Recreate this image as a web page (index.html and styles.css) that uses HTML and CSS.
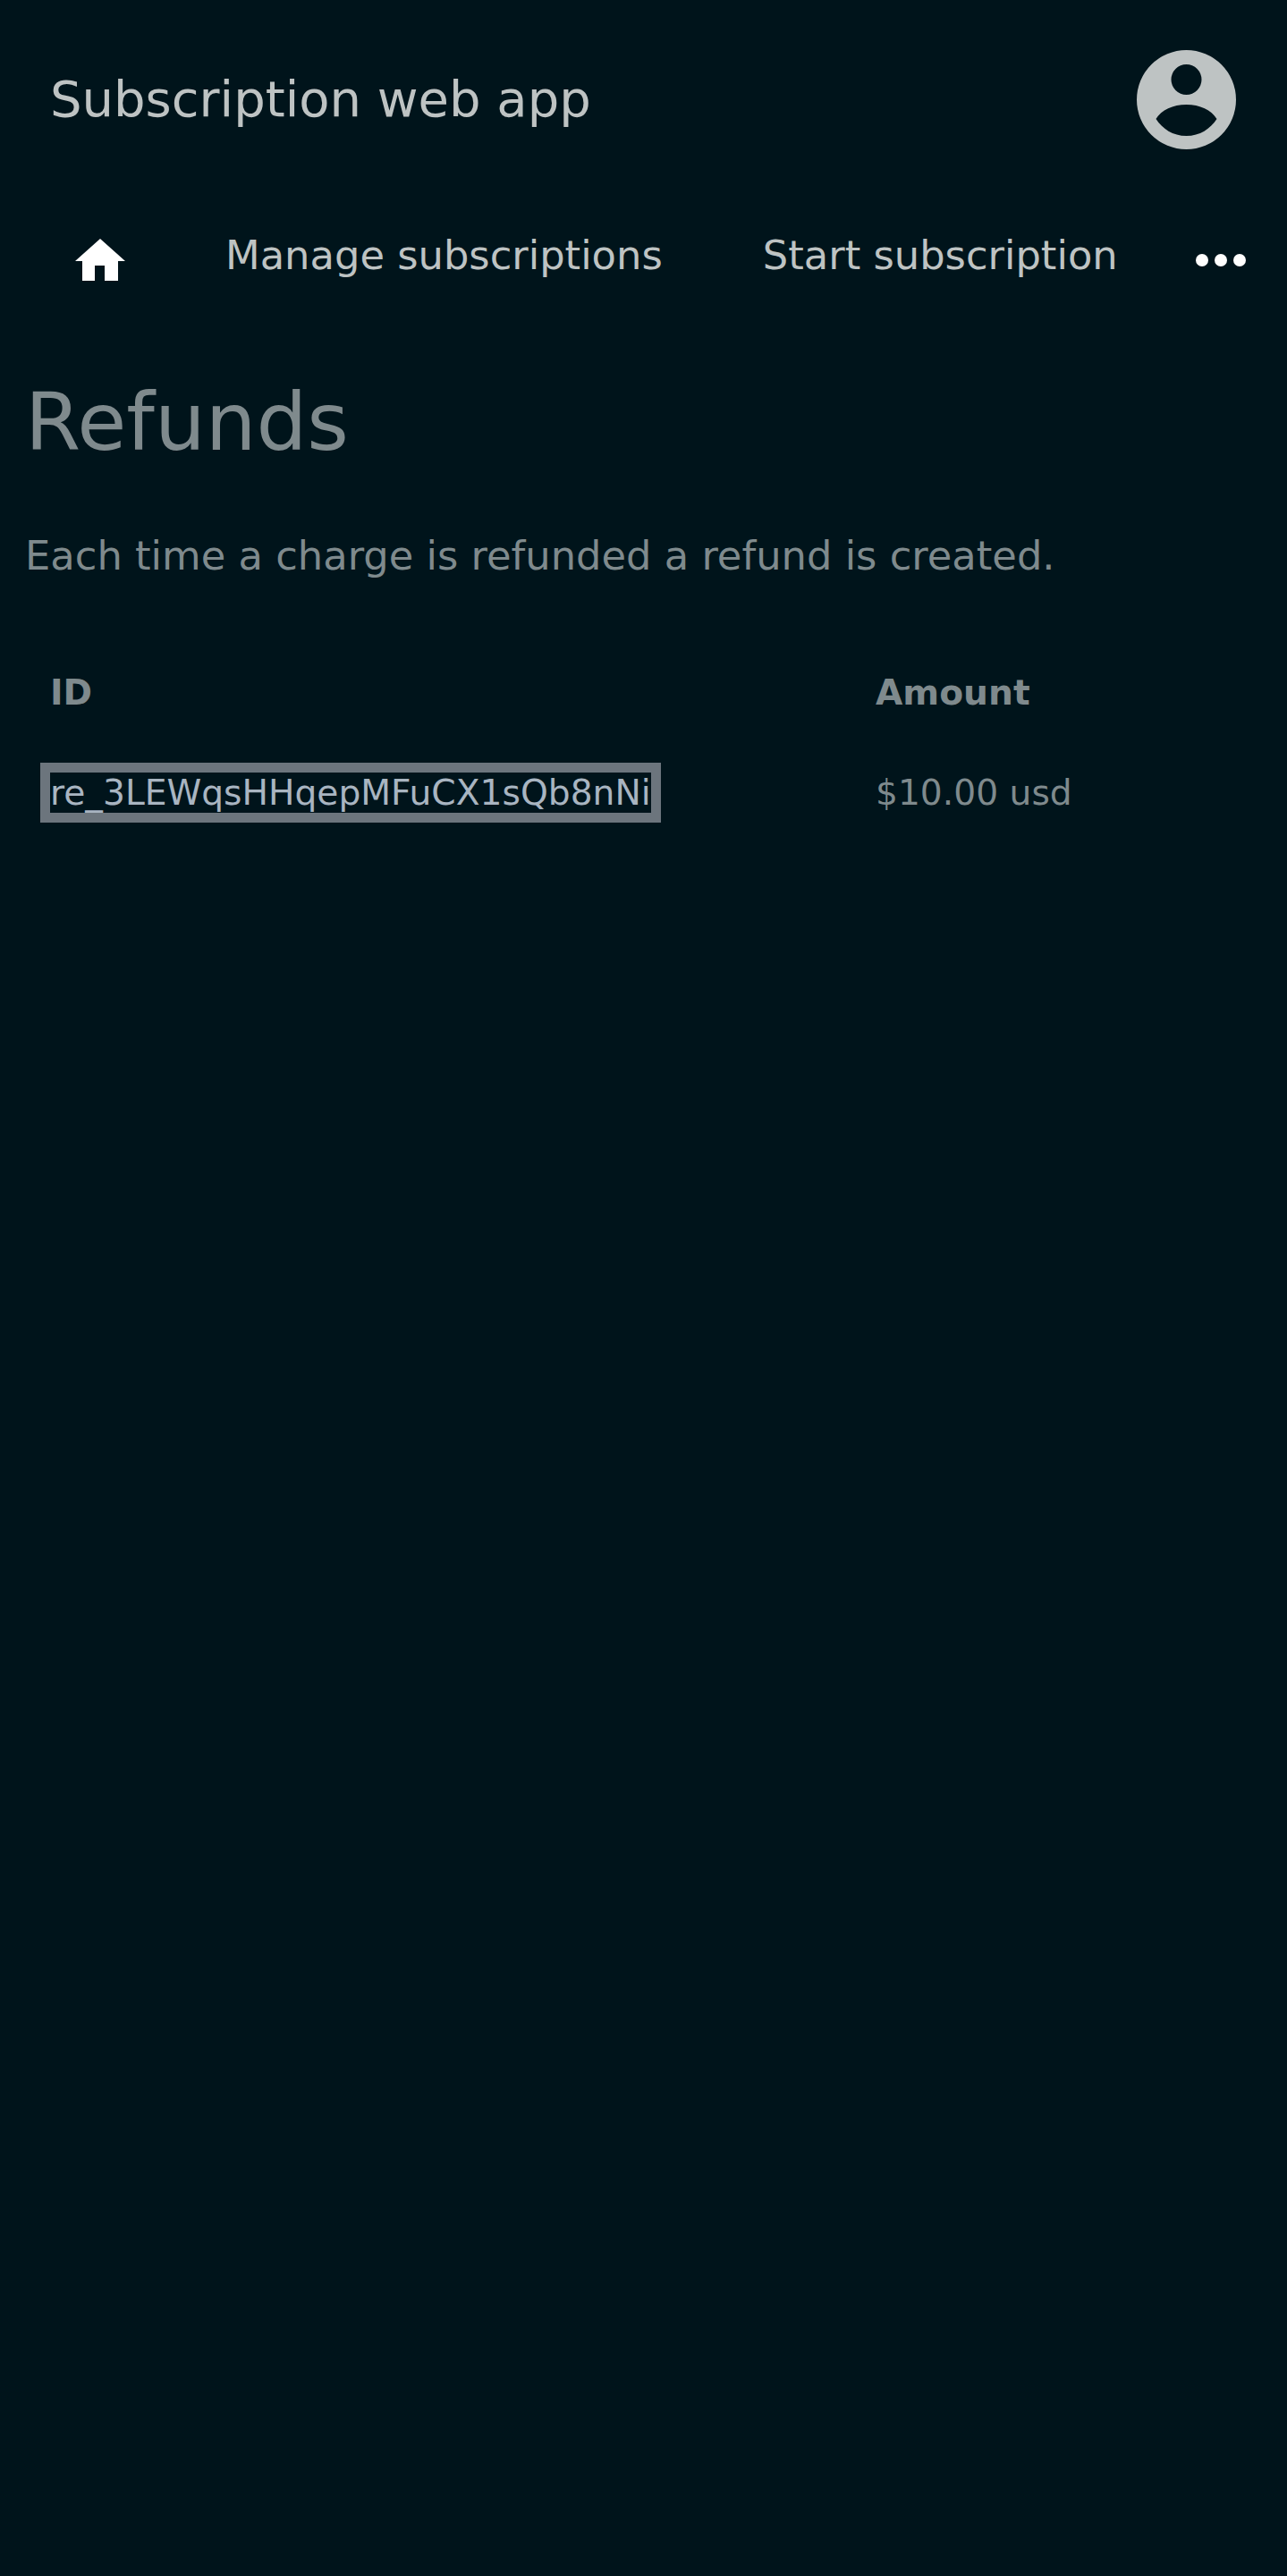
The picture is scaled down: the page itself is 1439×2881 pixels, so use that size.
FILE: index.html
```html
<!doctype html>

<html lang="en">
  <head>
    <meta charset="utf-8">
    <title>Subscription web app - Refunds</title>
    <link rel="stylesheet" href="styles.css">
  </head>

  <body>
    <header class="topbar">
      <a class="brand" href="#">Subscription web app</a>
      <a class="avatar" href="#" aria-label="Account">
        <svg viewBox="0 0 111 111" width="111" height="111">
          <path fill="#bec3c3" fill-rule="evenodd" d="M55.500 0a55.500 55.500 0 1 0 0 111a55.500 55.500 0 1 0 0-111zM55.500 16a17 17 0 1 1 0 34a17 17 0 1 1 0-34zM55.500 61c15 0 28 6 34 16c-7 11-19 19-34 19s-27-8-34-19c6-10 19-16 34-16z"/>
        </svg>
      </a>
    </header>

    <nav class="menu">
      <a class="menu-home" href="#" aria-label="Home">
        <svg viewBox="0 0 56 47" width="56" height="47">
          <path fill="#fff" d="M28 0L56 25H48V47H33V30H22V47H8V25H0z"/>
        </svg>
      </a>
      <a class="menu-link" href="#">Manage subscriptions</a>
      <a class="menu-link" href="#">Start subscription</a>
      <a class="menu-more" href="#" aria-label="More">
        <span class="dot"></span><span class="dot"></span><span class="dot"></span>
      </a>
    </nav>

    <main class="content">
      <h1>Refunds</h1>
      <p class="lead">Each time a charge is refunded a refund is created.</p>
      <table class="refunds">
        <thead>
          <tr>
            <th class="col-id">ID</th>
            <th>Amount</th>
          </tr>
        </thead>
        <tbody>
          <tr>
            <td><a class="refund-link" href="#">re_3LEWqsHHqepMFuCX1sQb8nNi</a></td>
            <td>$10.00 usd</td>
          </tr>
        </tbody>
      </table>
    </main>
  </body>
</html>
```

FILE: styles.css
```css
:root {
  --bg: #00141b;
  --brand: #bec3c3;
  --muted: #7f8a8d;
  --focus: #6c757d;
  --link: #a9b5c1;
}

html {
  background: var(--bg);
  font-family: "DejaVu Sans", sans-serif;
  color: var(--muted);
}

body {
  margin: 0;
  min-height: 2881px;
  background: var(--bg);
}

a {
  text-decoration: none;
}

.topbar {
  display: flex;
  align-items: center;
  justify-content: space-between;
  padding: 56px 57px 0 56px;
}

.brand {
  font-size: 56px;
  margin-bottom: 2px;
  color: var(--brand);
}

.avatar {
  display: block;
  height: 111px;
}

.menu {
  display: flex;
  align-items: center;
  margin-top: 78px;
  padding-left: 84px;
  height: 91px;
}

.menu-home {
  display: block;
  height: 47px;
  margin-right: 112px;
}

.menu-link {
  font-size: 44.8px;
  color: var(--brand);
  margin-right: 112px;
  margin-bottom: 10px;
}

.menu-more {
  display: flex;
  gap: 7px;
  margin-left: -25px;
}

.dot {
  width: 14px;
  height: 14px;
  border-radius: 50%;
  background: #fff;
}

.content {
  padding: 0 28px;
}

h1 {
  font-size: 89.6px;
  font-weight: 400;
  margin: 84px 0 0;
}

.lead {
  font-size: 44.8px;
  margin: 71px 0 0;
}

.refunds {
  width: 100%;
  margin-top: 71px;
  border-collapse: collapse;
  font-size: 39.2px;
}

th,
td {
  padding: 33px 28px;
  text-align: left;
}

th {
  padding-bottom: 34px;
}

.col-id {
  width: 867px;
}

.refund-link {
  color: var(--link);
  outline: 11px solid var(--focus);
}
```
